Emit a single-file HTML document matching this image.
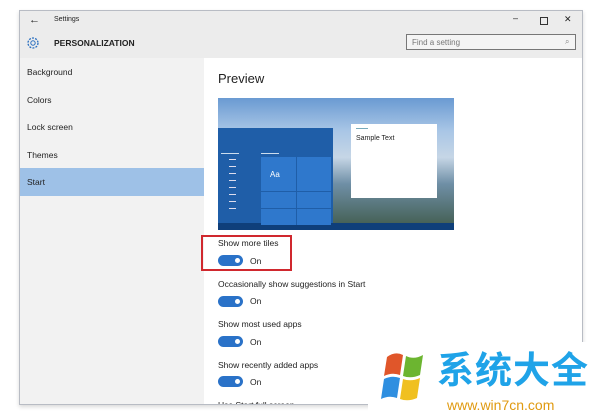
<!DOCTYPE html>
<html><head><style>
body{margin:0;width:600px;height:419px;background:#fff;position:relative;overflow:hidden;font-family:"Liberation Sans","Noto Sans CJK SC",sans-serif;}
.a{position:absolute}
.win{left:19px;top:10px;width:564px;height:395px;background:#fff;border:1px solid #b8bcc4;box-sizing:border-box;overflow:hidden;box-shadow:0 2px 4px rgba(0,0,0,.15)}
.t{font-size:8.5px;color:#222}
.tg{position:absolute;width:25px;height:11px;border-radius:6px;background:#2a72c8}
.tg:after{content:"";position:absolute;right:3px;top:3px;width:5px;height:5px;border-radius:50%;background:#fff}
</style></head><body>
<div class="a win">
 <div class="a" style="left:0;top:0;width:564px;height:47px;background:#ececec"></div>
 <div class="a t" style="left:9px;top:3px;font-size:11px">←</div>
 <div class="a t" style="left:34px;top:5px;font-size:7px">Settings</div>
 <div class="a t" style="left:493px;top:2px;font-size:9px">–</div>
 <div class="a" style="left:520px;top:6px;width:6px;height:6px;border:1px solid #333"></div>
 <div class="a t" style="left:544px;top:3px;font-size:9px">✕</div>
 <svg class="a" style="left:6px;top:25px" width="14" height="14" viewBox="0 0 14 14"><circle cx="7" cy="7" r="5" fill="none" stroke="#2a6fc0" stroke-width="1.3" stroke-dasharray="2 1.2"/><circle cx="7" cy="7" r="2.2" fill="none" stroke="#2a6fc0" stroke-width="1"/></svg>
 <div class="a t" style="left:34px;top:27px;font-size:8.5px;font-weight:bold">PERSONALIZATION</div>
 <div class="a" style="left:386px;top:23px;width:170px;height:16px;border:1px solid #777;box-sizing:border-box;background:#f4f4f4"></div>
 <div class="a" style="left:392px;top:27px;font-size:8px;color:#777">Find a setting</div>
 <div class="a" style="left:545px;top:26px;font-size:8px;color:#888">⌕</div>
 <div class="a" style="left:0;top:47px;width:184px;height:350px;background:#f2f2f2"></div>
 <div class="a" style="left:0;top:157px;width:184px;height:28px;background:#9ec1e7"></div>
 <div class="a t" style="left:7px;top:56px">Background</div>
 <div class="a t" style="left:7px;top:84px">Colors</div>
 <div class="a t" style="left:7px;top:111px">Lock screen</div>
 <div class="a t" style="left:7px;top:139px">Themes</div>
 <div class="a t" style="left:7px;top:166px">Start</div>
 <div class="a" style="left:198px;top:60px;font-size:13px;color:#222">Preview</div>
 <div class="a" style="left:198px;top:87px;width:236px;height:132px;background:linear-gradient(180deg,#6a9ad2 0%,#a9c6e6 25%,#c6d6e6 45%,#6f8fa6 65%,#3f5a4a 100%)"></div>
 <div class="a" style="left:198px;top:117px;width:115px;height:102px;background:#1f5ea8"></div>
 <div class="a" style="left:198px;top:212px;width:236px;height:7px;background:#0f3f7a"></div>
 <div class="a" style="left:241px;top:146px;width:70px;height:68px;background:#2f78cc"></div>
 <div class="a" style="left:276px;top:146px;width:1px;height:68px;background:#1f5ea8"></div>
 <div class="a" style="left:241px;top:180px;width:70px;height:1px;background:#1f5ea8"></div>
 <div class="a" style="left:241px;top:197px;width:70px;height:1px;background:#1f5ea8"></div>
 <div class="a" style="left:250px;top:159px;font-size:8px;color:#fff">Aa</div>
 <div class="a" style="left:241px;top:142px;width:18px;height:1px;background:#cde"></div>
 <div class="a" style="left:201px;top:142px;width:18px;height:1px;background:#cde"></div>
 <div class="a" style="left:209px;top:148px;width:7px;height:56px;background:repeating-linear-gradient(180deg,#dde 0 1px,transparent 1px 7px)"></div>
 <div class="a" style="left:331px;top:113px;width:86px;height:74px;background:#fff"></div>
 <div class="a" style="left:336px;top:117px;width:12px;height:1px;background:#7ab"></div>
 <div class="a" style="left:336px;top:124px;font-size:7px;color:#222">Sample Text</div>
 <div class="a" style="left:181px;top:224px;width:91px;height:36px;border:2px solid #d0282e;box-sizing:border-box"></div>
 <div class="a t" style="left:198px;top:227px">Show more tiles</div>
 <div class="tg" style="left:198px;top:244px"></div><div class="a t" style="left:230px;top:245px">On</div>
 <div class="a t" style="left:198px;top:268px">Occasionally show suggestions in Start</div>
 <div class="tg" style="left:198px;top:285px"></div><div class="a t" style="left:230px;top:285px">On</div>
 <div class="a t" style="left:198px;top:308px">Show most used apps</div>
 <div class="tg" style="left:198px;top:325px"></div><div class="a t" style="left:230px;top:326px">On</div>
 <div class="a t" style="left:198px;top:349px">Show recently added apps</div>
 <div class="tg" style="left:198px;top:365px"></div><div class="a t" style="left:230px;top:366px">On</div>
 <div class="a t" style="left:198px;top:389px">Use Start full screen</div>
</div>
<div class="a" style="left:368px;top:342px;width:232px;height:77px;background:#fff"></div>
<svg class="a" style="left:381px;top:348px" width="50" height="62" viewBox="0 0 50 60">
 <path d="M6 8 Q14 2 22 6 L19 26 Q11 23 3 27Z" fill="#e0562a"/>
 <path d="M25 7 Q33 11 42 6 L39 26 Q30 30 22 27Z" fill="#6cb530"/>
 <path d="M3 30 Q11 26 19 29 L16 49 Q8 46 0 50Z" fill="#2f8fe0"/>
 <path d="M22 30 Q30 33 39 29 L36 49 Q27 53 19 50Z" fill="#f0c020"/>
</svg>
<div class="a" style="left:437px;top:350px;font-size:37px;font-weight:bold;color:#1fa3e8;letter-spacing:1px;line-height:42px">系统大全</div>
<div class="a" style="left:447px;top:397px;font-size:14px;color:#e09a10;line-height:16px">www.win7cn.com</div>
</body></html>
